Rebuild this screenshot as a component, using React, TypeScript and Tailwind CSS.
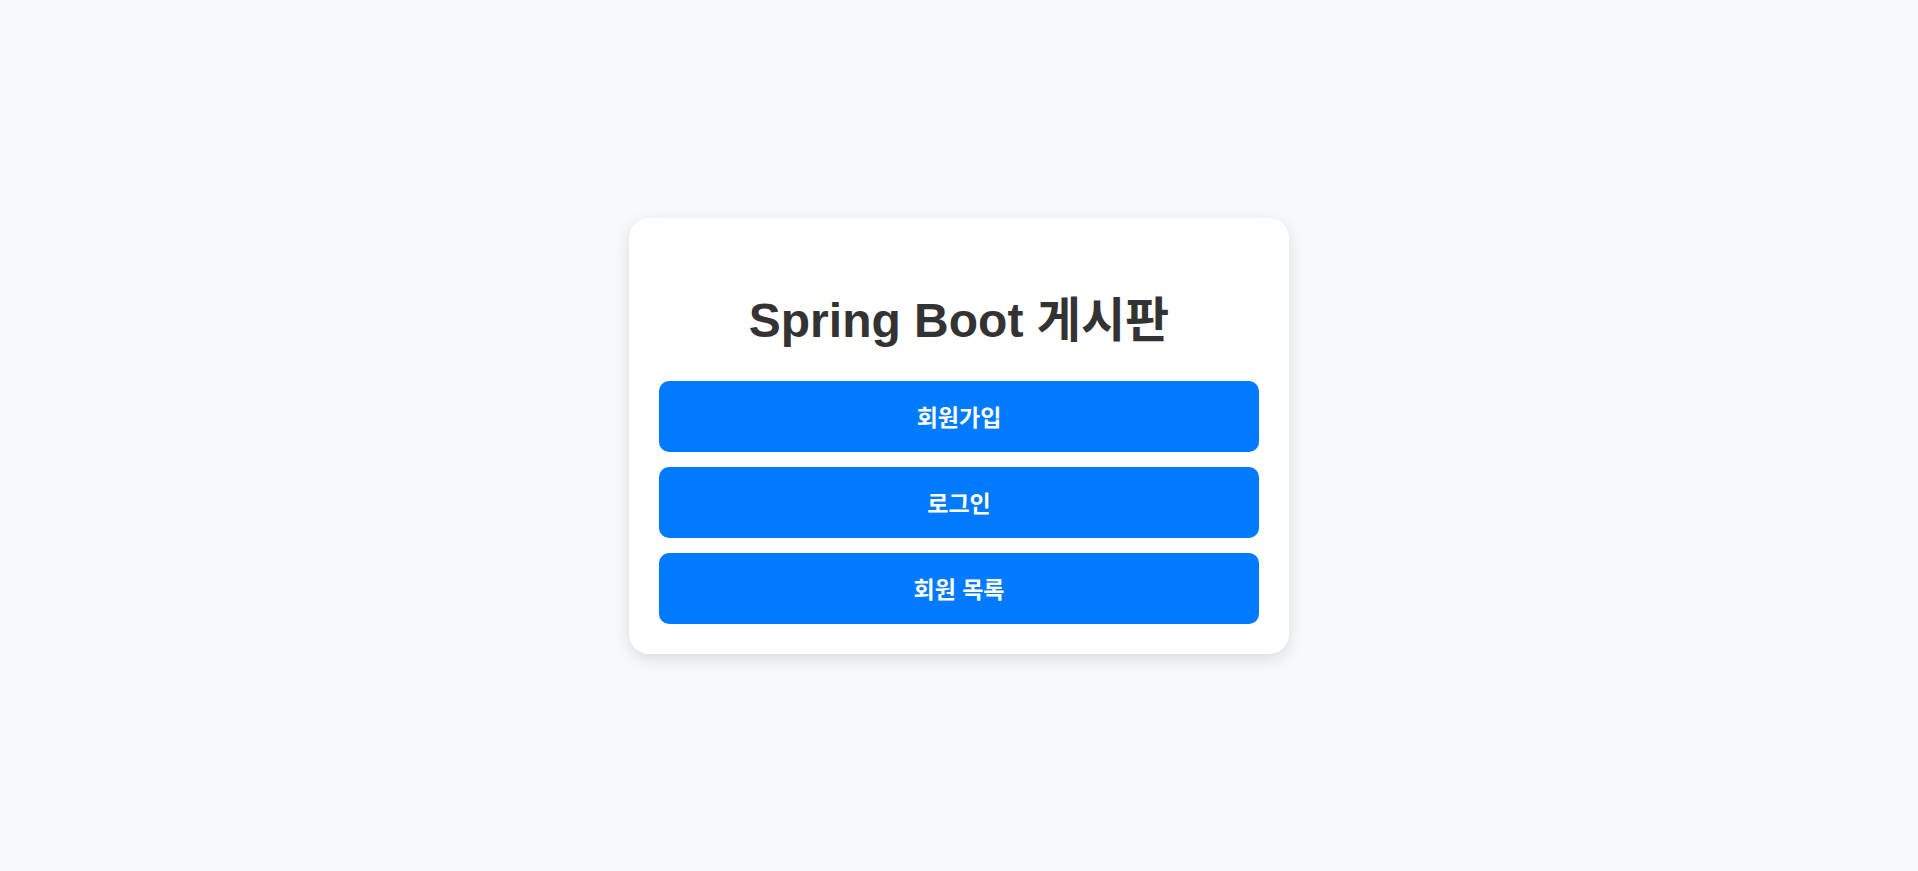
export default function App() {
  const links = ["회원가입", "로그인", "회원 목록"];

  return (
    <div
      className="min-h-screen bg-[#f8f9fa] flex items-center justify-center"
      style={{ fontFamily: '"Liberation Sans", "Noto Sans CJK KR", sans-serif' }}
    >
      <div className="w-[660px] bg-white rounded-[20px] p-[30px] shadow-[0_5px_15px_rgba(0,0,0,0.12)]">
        <h1 className="mt-[45px] mb-[33px] text-center text-[48px] leading-[55px] font-bold text-[#333333]">
          Spring Boot 게시판
        </h1>

        <div className="flex flex-col gap-[15px]">
          {links.map((label) => (
            <button
              key={label}
              type="button"
              className="h-[71px] w-full pt-[4px] rounded-[10px] bg-[#007bff] text-white text-[23px] leading-[30px] font-bold hover:bg-[#0069d9] transition"
            >
              {label}
            </button>
          ))}
        </div>
      </div>
    </div>
  );
}
